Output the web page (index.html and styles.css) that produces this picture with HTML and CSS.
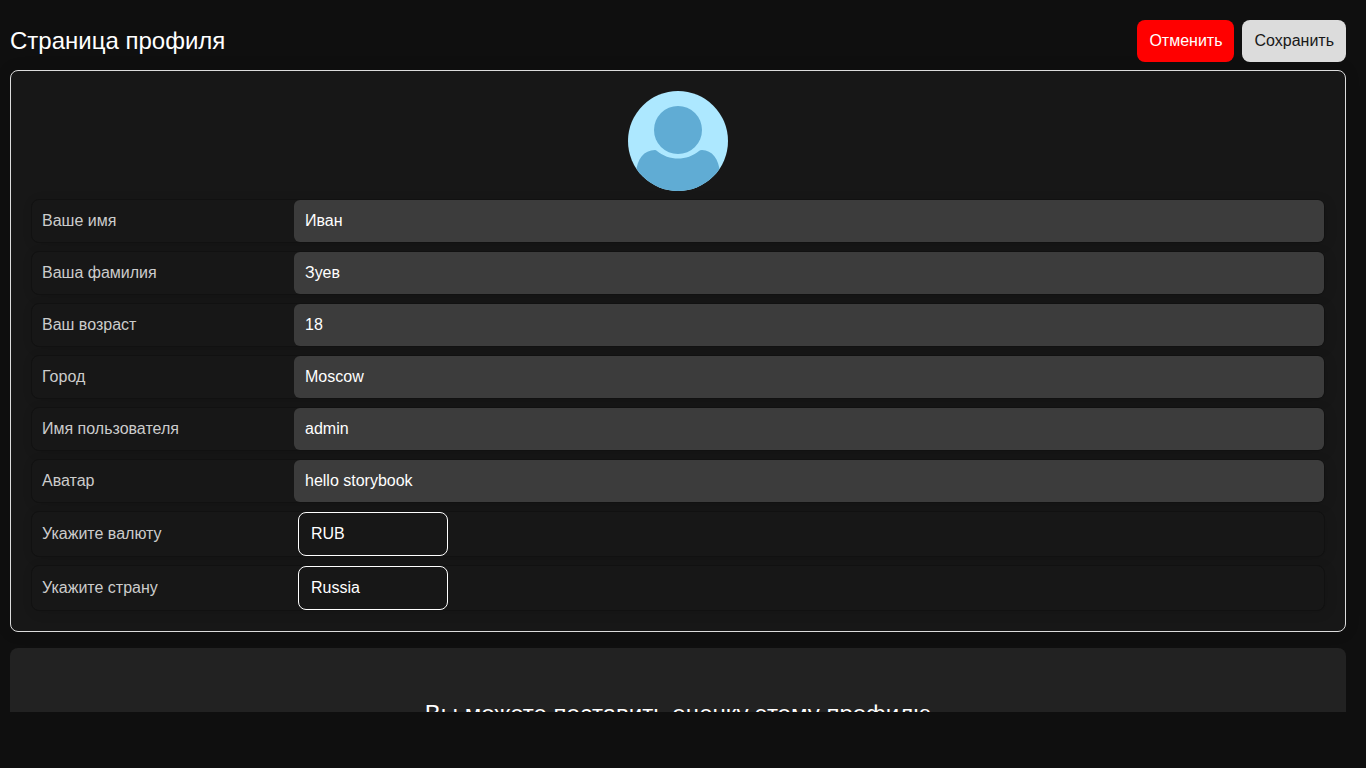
FILE: index.html
```html
<!DOCTYPE html>
<html lang="ru">
<head>
<meta charset="utf-8">
<meta name="viewport" content="width=device-width, initial-scale=1">
<title>Страница профиля</title>
<link rel="stylesheet" href="styles.css">
</head>
<body>
<main class="page">
  <header class="page-header">
    <h1 class="title">Страница профиля</h1>
    <div class="actions">
      <button class="btn btn-cancel" type="button">Отменить</button>
      <button class="btn btn-save" type="submit" form="profile">Сохранить</button>
    </div>
  </header>

  <form class="card" id="profile">
    <svg class="avatar" viewBox="0 0 100 100" aria-hidden="true">
      <defs><clipPath id="round"><circle cx="50" cy="50" r="50"/></clipPath></defs>
      <g clip-path="url(#round)">
        <rect width="100" height="100" fill="#ade8ff"/>
        <circle cx="50" cy="39" r="24" fill="#60acd4"/>
        <path d="M8 82C9 68 16 59 27 59Q28 59 29 60C41 70 59 70 71 60Q72 59 74 59C84 59 91 68 92 82V100H8Z" fill="#60acd4"/>
      </g>
    </svg>
    <div class="row">
      <label class="label" for="first">Ваше имя</label>
      <input class="input" id="first" type="text" value="Иван">
    </div>
    <div class="row">
      <label class="label" for="last">Ваша фамилия</label>
      <input class="input" id="last" type="text" value="Зуев">
    </div>
    <div class="row">
      <label class="label" for="age">Ваш возраст</label>
      <input class="input" id="age" type="text" value="18">
    </div>
    <div class="row">
      <label class="label" for="city">Город</label>
      <input class="input" id="city" type="text" value="Moscow">
    </div>
    <div class="row">
      <label class="label" for="username">Имя пользователя</label>
      <input class="input" id="username" type="text" value="admin">
    </div>
    <div class="row">
      <label class="label" for="avatar">Аватар</label>
      <input class="input" id="avatar" type="text" value="hello storybook">
    </div>
    <div class="row">
      <label class="label" for="currency">Укажите валюту</label>
      <select class="select" id="currency"><option>RUB</option></select>
    </div>
    <div class="row">
      <label class="label" for="country">Укажите страну</label>
      <select class="select" id="country"><option>Russia</option></select>
    </div>
  </form>

  <section class="rating">
    <h2 class="title">Вы можете поставить оценку этому профилю</h2>
  </section>
</main>
</body>
</html>
```

FILE: styles.css
```css
*,
*::before,
*::after {
  box-sizing: border-box;
}

body {
  margin: 0;
  background: #0f0f0f;
  color: #fff;
  font: 16px/24px "Liberation Sans", Arial, sans-serif;
}

.page {
  height: calc(100vh - 56px);
  padding: 20px 20px 20px 10px;
  overflow-y: auto;
  scrollbar-width: none;
}

.page-header {
  display: flex;
  align-items: center;
  justify-content: space-between;
  margin-bottom: 8px;
}

.title {
  margin: 0;
  font-size: 24px;
  font-weight: 400;
  line-height: 32px;
}

.actions {
  display: flex;
  gap: 8px;
}

.btn {
  padding: 9px 12px;
  border: 0;
  border-radius: 8px;
  font: inherit;
  cursor: pointer;
}

.btn-cancel {
  background: #f00;
  color: #fff;
}

.btn-save {
  background: #dcdcdc;
  color: #181818;
}

.card {
  display: flex;
  flex-direction: column;
  gap: 8px;
  padding: 20px;
  border: 1px solid #dcdcdc;
  border-radius: 8px;
  background: #171717;
  box-shadow: 0 0 16px rgba(0, 0, 0, 0.1);
}

.avatar {
  align-self: center;
  width: 100px;
  height: 100px;
}

.row {
  display: grid;
  grid-template-columns: 262px 1fr;
  align-items: center;
  border: 1px solid #111;
  border-radius: 8px;
  background: #171717;
  box-shadow: 2px 2px 12px rgba(0, 0, 0, 0.1);
}

.label {
  padding-left: 10px;
  color: #ccc;
}

.input {
  width: 100%;
  height: 42px;
  padding: 0 11px;
  border: 0;
  border-radius: 6px;
  background: #3c3c3c;
  color: #fff;
  font: inherit;
}

.select {
  width: 150px;
  height: 44px;
  margin-left: 4px;
  padding: 0 12px;
  appearance: none;
  border: 1px solid #fff;
  border-radius: 8px;
  background: #171717;
  color: #fff;
  font: inherit;
}

.rating {
  margin-top: 16px;
  padding: 50px 20px;
  border-radius: 8px;
  background: #222;
  text-align: center;
}
```
